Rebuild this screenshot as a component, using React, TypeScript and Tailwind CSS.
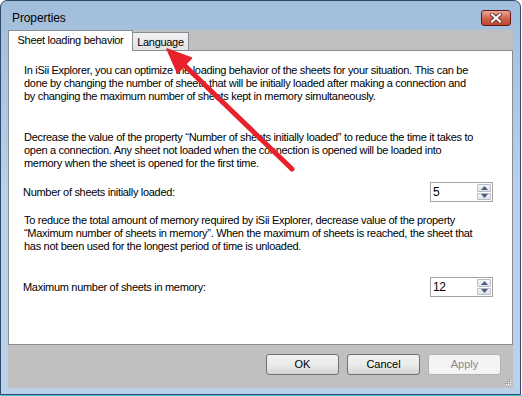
import React from "react";

const Spinner = ({ value }: { value: string }) => (
  <div className="mr-[4px] flex h-[20px] w-[63px] items-center border border-[#a4a4a4] bg-white pl-[2px] pr-[1px]">
    <span className="flex-1 text-[12px] leading-none text-black">{value}</span>
    <div className="flex h-[16px] w-[14px] flex-col gap-[1px]">
      <div className="flex flex-1 items-center justify-center rounded-[1px] border border-[#b8bcc4] bg-gradient-to-b from-[#f5f6f8] to-[#dfe2e8]">
        <svg width="7" height="4" viewBox="0 0 7 4">
          <path d="M0 4 L3.5 0 L7 4 Z" fill="#4b5c80" />
        </svg>
      </div>
      <div className="flex flex-1 items-center justify-center rounded-[1px] border border-[#b8bcc4] bg-gradient-to-b from-[#f5f6f8] to-[#dfe2e8]">
        <svg width="7" height="4" viewBox="0 0 7 4">
          <path d="M0 0 L7 0 L3.5 4 Z" fill="#4b5c80" />
        </svg>
      </div>
    </div>
  </div>
);

const Button = ({ label, disabled }: { label: string; disabled?: boolean }) => (
  <div
    className={
      disabled
        ? "flex h-[21px] w-[73px] items-center justify-center rounded-[3px] border border-[#adb2b5] bg-[#f4f4f4] text-[#8a8a8a]"
        : "flex h-[21px] w-[73px] items-center justify-center rounded-[3px] border border-[#707070] bg-gradient-to-b from-[#f2f2f2] via-[#ebebeb] to-[#d4d4d4] text-black"
    }
  >
    {label}
  </div>
);

export default function App() {
  return (
    <div
      className="relative h-[396px] w-[522px] bg-white"
      style={{ fontFamily: '"Liberation Sans", Arial, sans-serif' }}
    >
      <div className="flex h-[395px] w-[521px] flex-col rounded-t-[7px] border border-[#2f4a66] bg-gradient-to-b from-[#a2bedc] via-[#b9d1ea] to-[#b9d1ea]">
        {/* title bar */}
        <div className="flex h-[29px] items-start justify-between pl-[11px] pr-[9px] pt-[9px]">
          <span className="text-[12px] leading-[16px] tracking-[-0.1px] text-black">Properties</span>
          <div className="flex h-[16px] w-[30px] items-center justify-center rounded-[3px] border border-[#5a1c14] bg-gradient-to-b from-[#e9a99b] via-[#d2654f] to-[#c0452f]">
            <svg width="12" height="10" viewBox="0 0 12 10">
              <path d="M2 1.5 L10 8.5 M10 1.5 L2 8.5" stroke="#6b2a20" strokeWidth="4" strokeLinecap="square" />
              <path d="M2 1.5 L10 8.5 M10 1.5 L2 8.5" stroke="#ffffff" strokeWidth="2.2" strokeLinecap="square" />
            </svg>
          </div>
        </div>

        {/* client */}
        <div className="mx-[7px] mb-[6px] flex flex-1 flex-col bg-[#c0c0c0] text-[11px] tracking-[-0.3px] text-black">
          {/* tabs */}
          <div className="flex h-[20px] items-end">
            <div className="relative z-10 -mb-px flex h-[21px] w-[125px] items-start justify-center border border-b-0 border-[#898c95] bg-white pt-[3px] leading-[13px]">
              Sheet loading behavior
            </div>
            <div className="-ml-px flex h-[18px] w-[57px] items-start justify-center border border-b-0 border-[#898c95] bg-gradient-to-b from-[#f2f2f2] to-[#e3e3e3] pt-[3px] leading-[13px]">
              Language
            </div>
          </div>

          {/* panel */}
          <div className="flex h-[295px] flex-col border border-[#898c95] bg-white pt-[13px] leading-[13px]">
            <div className="px-[15px]">
              <div>In iSii Explorer, you can optimize the loading behavior of the sheets for your situation. This can be</div>
              <div>done by changing the number of sheets that will be initially loaded after making a connection and</div>
              <div>by changing the maximum number of sheets kept in memory simultaneously.</div>
            </div>
            <div className="mt-[28px] px-[15px]">
              <div>Decrease the value of the property “Number of sheets initially loaded” to reduce the time it takes to</div>
              <div>open a connection. Any sheet not loaded when the connection is opened will be loaded into</div>
              <div>memory when the sheet is opened for the first time.</div>
            </div>
            <div className="mt-[12px] flex h-[20px] items-center justify-between pl-[14px] pr-[15px]">
              <span>Number of sheets initially loaded:</span>
              <Spinner value="5" />
            </div>
            <div className="mt-[12px] px-[15px]">
              <div>To reduce the total amount of memory required by iSii Explorer, decrease value of the property</div>
              <div>“Maximum number of sheets in memory”. When the maximum of sheets is reached, the sheet that</div>
              <div>has not been used for the longest period of time is unloaded.</div>
            </div>
            <div className="mt-[24px] flex h-[20px] items-center justify-between pl-[14px] pr-[15px]">
              <span>Maximum number of sheets in memory:</span>
              <Spinner value="12" />
            </div>
          </div>

          {/* buttons */}
          <div className="relative flex flex-1 items-start justify-end gap-[8px] pr-[12px] pt-[9px] tracking-normal">
            <Button label="OK" />
            <Button label="Cancel" />
            <Button label="Apply" disabled />
            <svg className="absolute bottom-[2px] right-[1px]" width="7" height="7" viewBox="0 0 7 7">
              <rect x="5" y="1" width="1" height="1" fill="#ffffff" />
              <rect x="3" y="3" width="1" height="1" fill="#ffffff" />
              <rect x="5" y="3" width="1" height="1" fill="#ffffff" />
              <rect x="1" y="5" width="1" height="1" fill="#ffffff" />
              <rect x="3" y="5" width="1" height="1" fill="#ffffff" />
              <rect x="5" y="5" width="1" height="1" fill="#ffffff" />
              <rect x="4" y="0" width="1" height="1" fill="#8a8a8a" />
              <rect x="2" y="2" width="1" height="1" fill="#8a8a8a" />
              <rect x="4" y="2" width="1" height="1" fill="#8a8a8a" />
              <rect x="0" y="4" width="1" height="1" fill="#8a8a8a" />
              <rect x="2" y="4" width="1" height="1" fill="#8a8a8a" />
              <rect x="4" y="4" width="1" height="1" fill="#8a8a8a" />
            </svg>
          </div>
        </div>
      </div>
      <div className="h-px w-full bg-[#3fc8d8]" />

      {/* red annotation arrow */}
      <svg className="pointer-events-none absolute left-0 top-0" width="522" height="396" viewBox="0 0 522 396">
        <line x1="182" y1="63" x2="292" y2="169" stroke="#e8222b" strokeWidth="5" strokeLinecap="round" />
        <path d="M167 49 L191.5 58 L177.5 73 Z" fill="#e8222b" stroke="#e8222b" strokeWidth="1.5" strokeLinejoin="round" />
      </svg>
    </div>
  );
}
